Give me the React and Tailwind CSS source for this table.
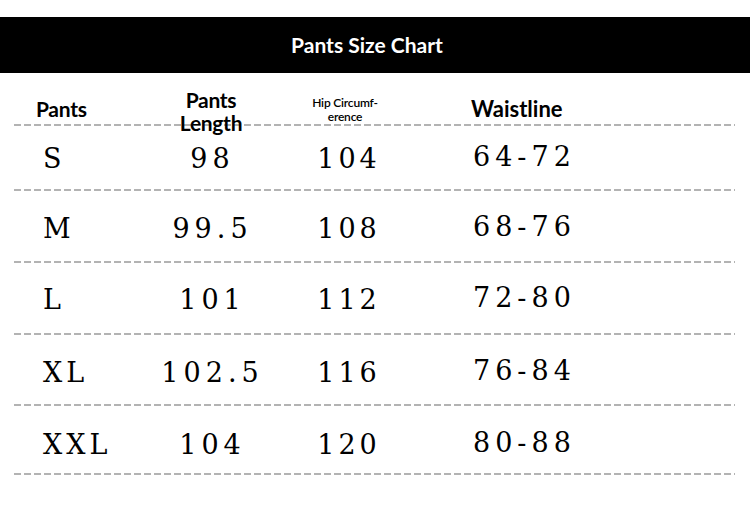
import React from 'react';

const rows = [
  { size: 'S', length: '98', hip: '104', waist: '64-72', h: 'h-[63px]', pad: 'pt-[1px]' },
  { size: 'M', length: '99.5', hip: '108', waist: '68-76', h: 'h-[70px]', pad: 'pt-[4px]' },
  { size: 'L', length: '101', hip: '112', waist: '72-80', h: 'h-[70px]', pad: 'pt-[2px]' },
  { size: 'XL', length: '102.5', hip: '116', waist: '76-84', h: 'h-[69px]', pad: 'pt-[5px]' },
  { size: 'XXL', length: '104', hip: '120', waist: '80-88', h: 'h-[67px]', pad: 'pt-[9px]' },
];

const Dashes = () => (
  <div className="h-[2px] w-full bg-[repeating-linear-gradient(90deg,#b3b3b3_0_7px,transparent_7px_10px)]" />
);

const App = () => {
  return (
    <div className="w-[750px] h-[508px] bg-white pt-[17px] text-black">
      {/* title bar */}
      <div className="h-[56px] bg-black flex items-center justify-center pr-[16px]">
        <h1 className="text-white font-['Lato',sans-serif] font-bold text-[21px] leading-none -translate-y-[1px]">
          Pants Size Chart
        </h1>
      </div>

      <div className="ml-[14px] w-[721px]">
        {/* column heads */}
        <div className="h-[51px] flex items-start font-['Lato',sans-serif] font-bold">
          <div className="w-[136px] pl-[22px] pt-[25px] text-[21px] leading-none tracking-[-0.3px]">Pants</div>
          <div className="w-[122px] pt-[15px] text-center text-[21px] leading-[23px] tracking-[-0.3px]">
            Pants
            <br />
            Length
          </div>
          <div className="w-[146px] pt-[23px] text-center text-[12px] leading-[14px] font-semibold tracking-[-0.2px]">
            Hip Circumf-
            <br />
            erence
          </div>
          <div className="flex-1 pl-[53px] pt-[25px] text-[22px] leading-none">Waistline</div>
        </div>
        <Dashes />

        {/* size rows */}
        {rows.map((r) => (
          <div key={r.size}>
            <div className={`${r.h} ${r.pad} flex items-center font-['DejaVu_Serif',serif] text-[27px] leading-none`}>
              <div className="w-[136px] pl-[29px] tracking-[4px]">{r.size}</div>
              <div className="w-[122px] text-center tracking-[5px] pl-[3px]">{r.length}</div>
              <div className="w-[150px] text-center tracking-[4px] pl-[4px]">{r.hip}</div>
              <div className="flex-1 pl-[51px] tracking-[5px] -translate-y-[2px]">{r.waist}</div>
            </div>
            <Dashes />
          </div>
        ))}
      </div>
    </div>
  );
};

export default App;
